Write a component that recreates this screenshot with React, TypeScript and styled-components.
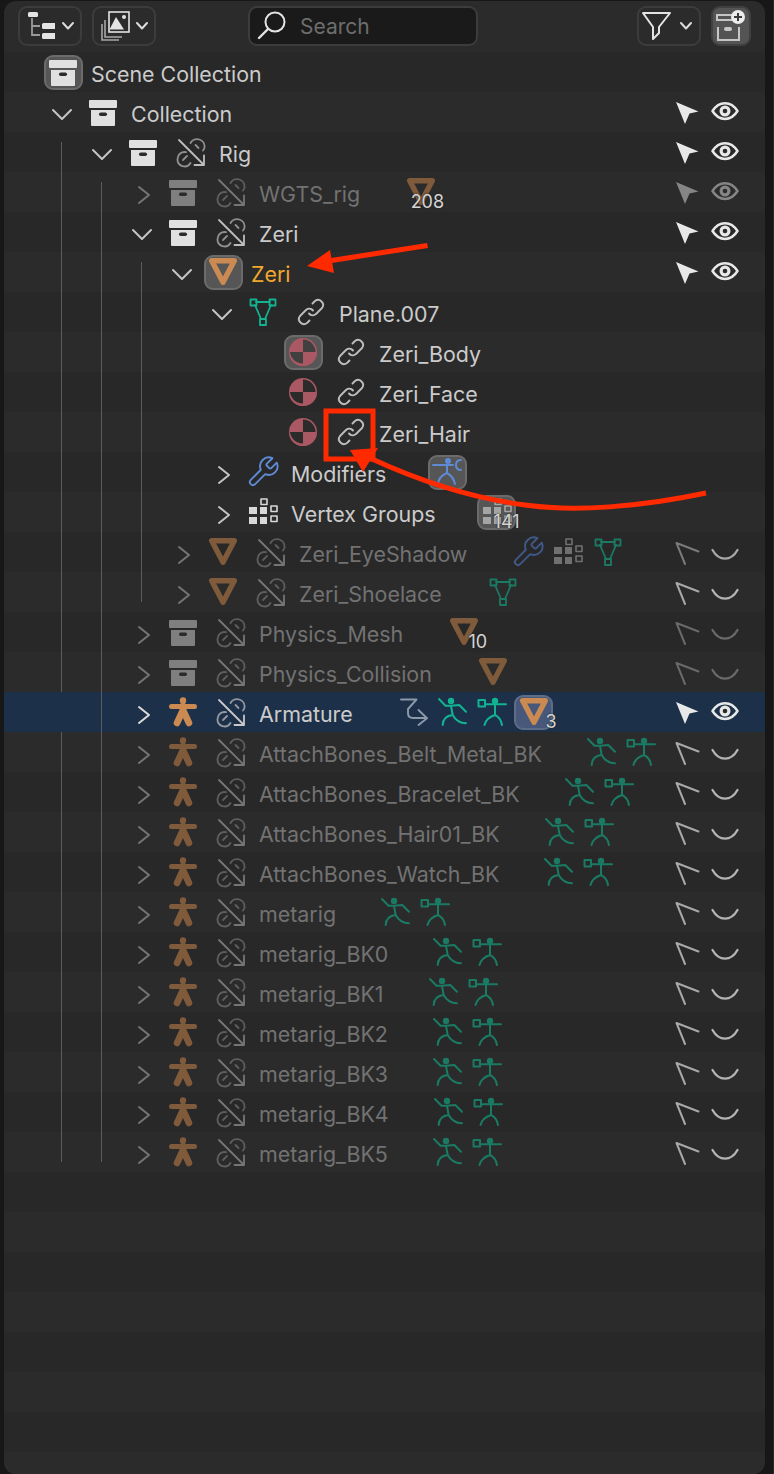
import React from "react";
import styled, { createGlobalStyle } from "styled-components";

const GlobalStyle = createGlobalStyle`
  html, body { margin: 0; padding: 0; background: #171717; }
  body { font-family: "Inter", "Liberation Sans", sans-serif; }
`;

const Page = styled.div`
  position: relative;
  width: 774px;
  height: 1474px;
  overflow: hidden;
  box-sizing: border-box;
  padding: 1px 8px 0 4px;
  border-right: 1px solid #2b2b2b;
`;

const Panel = styled.div`
  height: 1473px;
  background: #2b2b2b;
  border-radius: 12px;
  overflow: hidden;
`;

const Toolbar = styled.div`
  display: flex;
  align-items: center;
  height: 51px;
  box-sizing: border-box;
  padding: 5px 14px 6px;
  gap: 10px;
`;

const ToolButton = styled.div<{ $wide?: boolean; $on?: boolean }>`
  display: flex;
  align-items: center;
  justify-content: ${(p) => (p.$wide ? "flex-start" : "center")};
  box-sizing: border-box;
  width: ${(p) => (p.$wide ? 64 : 40)}px;
  height: 40px;
  border: 2px solid ${(p) => (p.$on ? "#404040" : "#3c3c3c")};
  border-radius: 9px;
  background: ${(p) => (p.$on ? "#545454" : "#2b2b2b")};
`;

const ToolGlyph = styled.svg<{ $left?: number; $right?: number }>`
  flex: none;
  width: 32px;
  height: 32px;
  margin-left: ${(p) => p.$left || 0}px;
  margin-right: ${(p) => p.$right || 0}px;
`;

const DropMark = styled.svg`
  flex: none;
  width: 14px;
  height: 10px;
`;

const SearchBox = styled.div`
  display: flex;
  align-items: center;
  box-sizing: border-box;
  width: 230px;
  height: 40px;
  margin-left: 82px;
  padding-left: 50px;
  position: relative;
  border: 2px solid #3c3c3c;
  border-radius: 9px;
  background: #1a1a1a;
  color: #6d6d6d;
  font-size: 21px;
`;

const SearchGlass = styled.svg`
  position: absolute;
  left: 6px;
  top: 2px;
  width: 32px;
  height: 32px;
`;

const Push = styled.div`
  flex: 1;
`;

const Tree = styled.div`
  height: 1422px;
  background: repeating-linear-gradient(#282828 0 40px, #2b2b2b 40px 80px);
`;

const Group = styled.div<{ $line: number }>`
  position: relative;
  &::before {
    content: "";
    position: absolute;
    left: ${(p) => p.$line}px;
    top: 10px;
    bottom: 10px;
    width: 1px;
    background: #5c5c5c;
  }
`;

const RowBar = styled.div<{ $depth: number; $selected?: boolean }>`
  display: flex;
  align-items: center;
  height: 40px;
  padding-left: ${(p) => 40 * (p.$depth + 1)}px;
  padding-right: 24px;
  background: ${(p) => (p.$selected ? "#1d3049" : "transparent")};
`;

const ChevronSlot = styled.div`
  display: flex;
  flex: none;
  align-items: center;
  justify-content: center;
  width: 38px;
  height: 40px;
  margin-right: 1px;
`;

const IconSlot = styled.div<{ $color?: string }>`
  position: relative;
  display: flex;
  flex: none;
  align-items: center;
  justify-content: center;
  width: 40px;
  height: 40px;
  color: ${(p) => p.$color || "#e0e0e0"};
`;

const IconBox = styled.div<{ $tint?: "gray" | "blue" }>`
  display: flex;
  align-items: center;
  justify-content: center;
  box-sizing: border-box;
  width: 39px;
  height: 35px;
  border: 2px solid ${(p) => (p.$tint === "blue" ? "#5d6d86" : "#6b6b6b")};
  border-radius: 9px;
  background: ${(p) => (p.$tint === "blue" ? "#47587a" : "#565656")};
`;

const LinkSlot = styled(IconSlot)`
  margin-left: 8px;
`;

const RestrictSlot = styled(IconSlot)`
  width: 32px;
`;

const Name = styled.span<{ $tone: Tone; $active?: boolean }>`
  flex: none;
  margin: 4px 0 0 8px;
  font-size: 21.4px;
  line-height: 36px;
  white-space: nowrap;
  color: ${(p) => (p.$active ? "#f2a72e" : p.$tone === "dim" ? "#727272" : "#cbcbcb")};
`;

const SubIcons = styled.div`
  display: flex;
  flex: none;
  margin-left: 41px;
`;

const Badge = styled.span`
  position: absolute;
  right: -3px;
  bottom: 0;
  font-size: 18px;
  line-height: 20px;
  color: #d4d4d4;
  text-shadow: 0 0 2px #222;
`;

const Restrict = styled.div`
  display: flex;
  flex: none;
  gap: 6px;
  margin-left: auto;
`;

const Glyph = styled.svg`
  display: block;
  flex: none;
  width: 32px;
  height: 32px;
  overflow: visible;
`;

const Marks = styled.svg`
  position: absolute;
  left: 0;
  top: 0;
  pointer-events: none;
`;

type Tone = "normal" | "dim";

const Line = { fill: "none", stroke: "currentColor", strokeLinecap: "round", strokeLinejoin: "round" } as const;

const I = ({ children }: { children: React.ReactNode }) => <Glyph viewBox="0 0 32 32">{children}</Glyph>;

const ChevronDown = ({ color }: { color: string }) => (
  <I>
    <path d="M6 14 15 23 24 14" fill="none" stroke={color} strokeWidth="2" strokeLinecap="round" strokeLinejoin="round" />
  </I>
);

const ChevronRight = ({ color }: { color: string }) => (
  <I>
    <path d="M12 11 22 19 12 27" fill="none" stroke={color} strokeWidth="2" strokeLinecap="round" strokeLinejoin="round" />
  </I>
);

const SmallChevron = () => (
  <DropMark viewBox="0 0 14 10">
    <path d="M2 2 7 7.500 12 2" fill="none" stroke="#dcdcdc" strokeWidth="2" strokeLinecap="round" strokeLinejoin="round" />
  </DropMark>
);

const CollectionIcon = () => (
  <I>
    <rect x="2" y="4" width="28" height="8" rx="1" fill="currentColor" />
    <path d="M4 14H28V29a1 1 0 0 1-1 1H5a1 1 0 0 1-1-1Z" fill="currentColor" />
    <rect x="12" y="16.500" width="8" height="3.500" rx="1.700" fill="#2b2b2b" />
  </I>
);

const UnlinkIcon = () => (
  <I>
    <path d="M4 4 29 29M29 19.500V29H19.500" {...Line} strokeWidth="1.800" />
    <g opacity=".7">
      <path d="M15.500 7A7.500 7.500 0 0 1 29.500 11.500A7.500 7.500 0 0 1 28 14.500" {...Line} strokeWidth="1.800" />
      <path d="M23.500 12 20.500 9" {...Line} strokeWidth="1.800" />
      <path d="M11 16.200A7 7 0 0 0 2.500 23A7 7 0 0 0 15.500 27" {...Line} strokeWidth="1.800" />
      <path d="M8 24 12 20" {...Line} strokeWidth="1.800" />
    </g>
  </I>
);

const LinkIcon = () => (
  <I>
    <path d="M17.500 7.500 20 5A5 5 0 0 1 27 12L21 18A5 5 0 0 1 14 17.500" {...Line} strokeWidth="1.900" />
    <path d="M14.500 24.500 12 27A5 5 0 0 1 5 20L11 14A5 5 0 0 1 18 14.500" {...Line} strokeWidth="1.900" />
  </I>
);

const MeshObjectIcon = () => (
  <I>
    <path d="M4.700 4.700H27.300L16 26.300Z" {...Line} strokeWidth="5.400" />
  </I>
);

const MeshDataIcon = () => (
  <I>
    <path d="M9 6H23M8 9 14 23M24 9 18 23" {...Line} strokeWidth="1.800" />
    <path d="M3.500 3.500H9.500V9.500H3.500ZM22.500 3.500H28.500V9.500H22.500ZM13 23H19V29H13Z" {...Line} strokeWidth="1.800" />
  </I>
);

const MaterialIcon = ({ dark }: { dark: string }) => (
  <I>
    <circle cx="16" cy="16" r="14" fill="#aa5863" />
    <path d="M16 16V3.500A12.500 12.500 0 0 1 28.500 16Z" fill={dark} />
    <path d="M16 16H3C3.500 21 8 27.500 16 27.500Z" fill={dark} />
    <path d="M3 17.500C4 26 11 29 16 29C22 29 28 25 29.500 17L29.500 20C28 26 22 30 16 30C10 30 4 26 2.500 20Z" fill="#aa5863" />
  </I>
);

const WrenchIcon = () => (
  <Glyph viewBox="1 1 22 22">
    <path d="M14.700 6.300a1 1 0 0 0 0 1.400l1.600 1.600a1 1 0 0 0 1.400 0l3.770-3.770a6 6 0 0 1-7.940 7.940l-6.910 6.910a2.120 2.120 0 0 1-3-3l6.910-6.910a6 6 0 0 1 7.940-7.940l-3.760 3.760z" {...Line} strokeWidth="1.300" />
  </Glyph>
);

const VertexGroupsIcon = () => (
  <I>
    <path d="M2 11H10V18H2ZM2 21H10V28H2ZM13 11H20V18H13ZM13 21H20V28H13Z" fill="currentColor" />
    <path d="M14 3H20V8.500H14ZM24 10H30V15.500H24ZM24 20H30V25.500H24Z" {...Line} strokeWidth="1.600" />
  </I>
);

const ArmatureObjectIcon = () => (
  <I>
    <circle cx="16" cy="4.500" r="3.200" fill="currentColor" />
    <path d="M4.500 10.500H27.500" {...Line} strokeWidth="5" />
    <path d="M16 10V14M16 14 10 27M16 14 22 27" {...Line} strokeWidth="6.600" />
  </I>
);

const PoseRunIcon = () => (
  <Glyph viewBox="2 0 32 32">
    <circle cx="15" cy="5" r="3.200" fill="currentColor" />
    <path d="M3 3 9.500 9.700H15L23.300 9 30 15.700M15 10 16.700 19M16.700 19Q7 20 6.700 29M16.700 19Q21 27 30 27.300" {...Line} strokeWidth="2" />
  </Glyph>
);

const BoneBoxIcon = () => (
  <Glyph viewBox="2 0 32 32">
    <circle cx="19" cy="5" r="3.200" fill="currentColor" />
    <path d="M2.500 4H9V10.500H2.500ZM9 8.300H30M19 8.500V19M19 19Q10 22 8.500 29M19 19Q25 22 26 29" {...Line} strokeWidth="2" />
  </Glyph>
);

const ModifierManIcon = () => (
  <I>
    <circle cx="17" cy="5" r="3" fill="currentColor" />
    <path d="M2 9H22M16 9V17M16 17Q8 20 7 28M16 17Q22 20 24 28M30 4Q25 4 25 9T30 14" {...Line} strokeWidth="2" />
  </I>
);

const ConstraintIcon = () => (
  <I>
    <path d="M3 3.500H18.500L10 13V17Q10 22 15 22H29M20.500 14 29 22.300 20.500 29" {...Line} strokeWidth="1.900" />
  </I>
);

const ArrowOn = () => (
  <I>
    <path d="M5 6 27.500 15.500 18.500 17.500 14 28Z" fill="currentColor" />
  </I>
);

const ArrowOff = () => (
  <I>
    <path d="M27.500 15.500 5.500 7 14 28" {...Line} strokeWidth="2" />
  </I>
);

const EyeOn = () => (
  <I>
    <path d="M3.500 15C10 4.500 22 4.500 28.500 15C22 25.500 10 25.500 3.500 15Z" {...Line} strokeWidth="2.500" />
    <circle cx="16" cy="15" r="5.500" fill="currentColor" />
    <circle cx="16" cy="15" r="2.300" fill="#2b2b2b" />
  </I>
);

const EyeOff = () => (
  <I>
    <path d="M3.500 14C10 25.500 22 25.500 28.500 14" {...Line} strokeWidth="2.300" />
  </I>
);

type RestrictKind = "on" | "faded" | "mid" | "soft" | "low";

const RestrictIcons = ({ kind }: { kind: RestrictKind }) => {
  const on = kind === "on" || kind === "faded";
  const arrow = { on: "#e8e8e8", faded: "#858585", mid: "#a9a9a9", soft: "#7a7a7a", low: "#6a6a6a" }[kind];
  const eye = { on: "#e8e8e8", faded: "#858585", mid: "#b4b4b4", soft: "#a8a8a8", low: "#6a6a6a" }[kind];
  return (
    <Restrict>
      <RestrictSlot $color={arrow}>{on ? <ArrowOn /> : <ArrowOff />}</RestrictSlot>
      <RestrictSlot $color={eye}>{on ? <EyeOn /> : <EyeOff />}</RestrictSlot>
    </Restrict>
  );
};

type RowProps = {
  depth: number;
  name: string;
  icon: React.ReactNode;
  iconColor?: string;
  boxed?: boolean;
  chevron?: "open" | "closed";
  link?: "link" | "unlink";
  tone?: Tone;
  active?: boolean;
  selected?: boolean;
  subs?: React.ReactNode;
  restrict?: RestrictKind;
};

const Row = ({ depth, name, icon, iconColor, boxed, chevron, link, tone = "normal", active, selected, subs, restrict }: RowProps) => {
  const dim = tone === "dim";
  const chevronColor = dim ? "#757575" : selected ? "#dcdcdc" : "#c4c4c4";
  return (
    <RowBar $depth={depth} $selected={selected}>
      <ChevronSlot>
        {chevron === "open" && <ChevronDown color={chevronColor} />}
        {chevron === "closed" && <ChevronRight color={chevronColor} />}
      </ChevronSlot>
      <IconSlot $color={iconColor || (dim ? "#7f7f7f" : "#e0e0e0")}>
        {boxed ? <IconBox>{icon}</IconBox> : icon}
      </IconSlot>
      {link && (
        <LinkSlot $color={dim ? "#767676" : selected ? "#c8c8c8" : "#bdbdbd"}>
          {link === "link" ? <LinkIcon /> : <UnlinkIcon />}
        </LinkSlot>
      )}
      <Name $tone={tone} $active={active}>{name}</Name>
      {subs && <SubIcons>{subs}</SubIcons>}
      {restrict && <RestrictIcons kind={restrict} />}
    </RowBar>
  );
};

const ORANGE_DIM = "#7f5a3b";
const ORANGE = "#cb8a52";
const GREEN_DIM = "#1b7a63";
const GREEN = "#12b391";
const BLUE = "#5f8ad6";

const Sub = ({ color, children, count, box }: { color: string; children: React.ReactNode; count?: string; box?: "gray" | "blue" }) => (
  <IconSlot $color={color}>
    {box ? <IconBox $tint={box}>{children}</IconBox> : children}
    {count && <Badge>{count}</Badge>}
  </IconSlot>
);

const RigPair = () => (
  <>
    <Sub color={GREEN_DIM}><PoseRunIcon /></Sub>
    <Sub color={GREEN_DIM}><BoneBoxIcon /></Sub>
  </>
);

const ArmatureChild = ({ name }: { name: string }) => (
  <Row
    depth={2}
    name={name}
    tone="dim"
    chevron="closed"
    link="unlink"
    icon={<ArmatureObjectIcon />}
    iconColor={ORANGE_DIM}
    subs={<RigPair />}
    restrict="mid"
  />
);

const App = () => {
  return (
    <Page>
      <GlobalStyle />
      <Panel>
        <Toolbar>
          <ToolButton $wide>
            <ToolGlyph $left={3} $right={6} viewBox="0 0 32 32">
              <rect x="5" y="2" width="10" height="5" rx="1.500" fill="#e4e4e4" />
              <path d="M9 8V25H17M9 16H17" fill="none" stroke="#9a9a9a" strokeWidth="1.800" />
              <rect x="19" y="13" width="14" height="6" rx="1.500" fill="#e4e4e4" />
              <rect x="19" y="23" width="14" height="6" rx="1.500" fill="#e4e4e4" />
            </ToolGlyph>
            <SmallChevron />
          </ToolButton>
          <ToolButton $wide>
            <ToolGlyph $left={6} $right={3} viewBox="0 0 32 32">
              <path d="M5 10V27H22M2 14V30H19" fill="none" stroke="#a8a8a8" strokeWidth="1.600" />
              <rect x="9" y="2" width="20" height="20" fill="none" stroke="#e4e4e4" strokeWidth="1.600" />
              <path d="M9.500 19.500 16 7 24 19.500Z" fill="#e4e4e4" />
              <circle cx="24" cy="7" r="2" fill="#e4e4e4" />
            </ToolGlyph>
            <SmallChevron />
          </ToolButton>
          <SearchBox>
            <SearchGlass viewBox="0 0 32 32">
              <circle cx="19" cy="12" r="9.500" fill="none" stroke="#e4e4e4" strokeWidth="2" />
              <path d="M12 19 3 28" fill="none" stroke="#e4e4e4" strokeWidth="2.400" strokeLinecap="round" />
            </SearchGlass>
            Search
          </SearchBox>
          <Push />
          <ToolButton $wide>
            <ToolGlyph $left={1} $right={7} viewBox="0 0 32 32">
              <path d="M3 3H30L19 17V23L13 29V17Z" fill="none" stroke="#e4e4e4" strokeWidth="2" strokeLinejoin="round" />
            </ToolGlyph>
            <SmallChevron />
          </ToolButton>
          <ToolButton $on>
            <ToolGlyph viewBox="0 0 32 32">
              <path d="M17 5H2V10H17M3 17V30H24V17" fill="none" stroke="#c6c6c6" strokeWidth="2" />
              <rect x="9" y="17" width="8" height="4" rx="2" fill="#c6c6c6" />
              <circle cx="23" cy="7" r="7" fill="#ececec" />
              <path d="M23 3V11M19 7H27" stroke="#3a3a3a" strokeWidth="2" />
            </ToolGlyph>
          </ToolButton>
        </Toolbar>
        <Tree>
          <Row depth={-1} name="Scene Collection" boxed icon={<CollectionIcon />} />
          <Row depth={0} name="Collection" chevron="open" icon={<CollectionIcon />} restrict="on" />
          <Group $line={57}>
            <Row depth={1} name="Rig" chevron="open" link="unlink" icon={<CollectionIcon />} restrict="on" />
            <Group $line={97}>
              <Row
                depth={2}
                name="WGTS_rig"
                tone="dim"
                chevron="closed"
                link="unlink"
                icon={<CollectionIcon />}
                subs={<Sub color={ORANGE_DIM} count="208"><MeshObjectIcon /></Sub>}
                restrict="faded"
              />
              <Row depth={2} name="Zeri" chevron="open" link="unlink" icon={<CollectionIcon />} restrict="on" />
              <Group $line={137}>
                <Row depth={3} name="Zeri" active chevron="open" boxed icon={<MeshObjectIcon />} iconColor={ORANGE} restrict="on" />
                <Row depth={4} name="Plane.007" chevron="open" link="link" icon={<MeshDataIcon />} iconColor={GREEN} />
                <Row depth={5} name="Zeri_Body" link="link" boxed icon={<MaterialIcon dark="#404040" />} />
                <Row depth={5} name="Zeri_Face" link="link" icon={<MaterialIcon dark="#2b2b2b" />} />
                <Row depth={5} name="Zeri_Hair" link="link" icon={<MaterialIcon dark="#2b2b2b" />} />
                <Row
                  depth={4}
                  name="Modifiers"
                  chevron="closed"
                  icon={<WrenchIcon />}
                  iconColor={BLUE}
                  subs={<Sub color={BLUE} box="gray"><ModifierManIcon /></Sub>}
                />
                <Row
                  depth={4}
                  name="Vertex Groups"
                  chevron="closed"
                  icon={<VertexGroupsIcon />}
                  iconColor="#d8d8d8"
                  subs={<Sub color="#a4a4a4" box="gray" count="141"><VertexGroupsIcon /></Sub>}
                />
                <Row
                  depth={3}
                  name="Zeri_EyeShadow"
                  tone="dim"
                  chevron="closed"
                  link="unlink"
                  icon={<MeshObjectIcon />}
                  iconColor={ORANGE_DIM}
                  subs={
                    <>
                      <Sub color="#40598a"><WrenchIcon /></Sub>
                      <Sub color="#707070"><VertexGroupsIcon /></Sub>
                      <Sub color={GREEN_DIM}><MeshDataIcon /></Sub>
                    </>
                  }
                  restrict="soft"
                />
                <Row
                  depth={3}
                  name="Zeri_Shoelace"
                  tone="dim"
                  chevron="closed"
                  link="unlink"
                  icon={<MeshObjectIcon />}
                  iconColor={ORANGE_DIM}
                  subs={<Sub color={GREEN_DIM}><MeshDataIcon /></Sub>}
                  restrict="mid"
                />
              </Group>
              <Row
                depth={2}
                name="Physics_Mesh"
                tone="dim"
                chevron="closed"
                link="unlink"
                icon={<CollectionIcon />}
                subs={<Sub color={ORANGE_DIM} count="10"><MeshObjectIcon /></Sub>}
                restrict="low"
              />
              <Row
                depth={2}
                name="Physics_Collision"
                tone="dim"
                chevron="closed"
                link="unlink"
                icon={<CollectionIcon />}
                subs={<Sub color={ORANGE_DIM}><MeshObjectIcon /></Sub>}
                restrict="low"
              />
              <Row
                depth={2}
                name="Armature"
                selected
                chevron="closed"
                link="unlink"
                icon={<ArmatureObjectIcon />}
                iconColor={ORANGE}
                subs={
                  <>
                    <Sub color="#8c99aa"><ConstraintIcon /></Sub>
                    <Sub color={GREEN}><PoseRunIcon /></Sub>
                    <Sub color={GREEN}><BoneBoxIcon /></Sub>
                    <Sub color={ORANGE} box="blue" count="3"><MeshObjectIcon /></Sub>
                  </>
                }
                restrict="on"
              />
              <ArmatureChild name="AttachBones_Belt_Metal_BK" />
              <ArmatureChild name="AttachBones_Bracelet_BK" />
              <ArmatureChild name="AttachBones_Hair01_BK" />
              <ArmatureChild name="AttachBones_Watch_BK" />
              <ArmatureChild name="metarig" />
              <ArmatureChild name="metarig_BK0" />
              <ArmatureChild name="metarig_BK1" />
              <ArmatureChild name="metarig_BK2" />
              <ArmatureChild name="metarig_BK3" />
              <ArmatureChild name="metarig_BK4" />
              <ArmatureChild name="metarig_BK5" />
            </Group>
          </Group>
        </Tree>
      </Panel>
      <Marks width="774" height="1474" viewBox="0 0 774 1474">
        <g fill="#ff2a00" stroke="none">
          <path d="M427 243 428 248 332 263 331 258Z" />
          <path d="M307 266 330 250 334 273Z" />
          <path d="M350 450 378 448 363 472Z" />
        </g>
        <rect x="326" y="411" width="47" height="48" fill="none" stroke="#ff2a00" strokeWidth="5" />
        <path d="M706 493C640 507 575 512 525 505C470 498 420 481 372 459" fill="none" stroke="#ff2a00" strokeWidth="5" />
      </Marks>
    </Page>
  );
};

export default App;
